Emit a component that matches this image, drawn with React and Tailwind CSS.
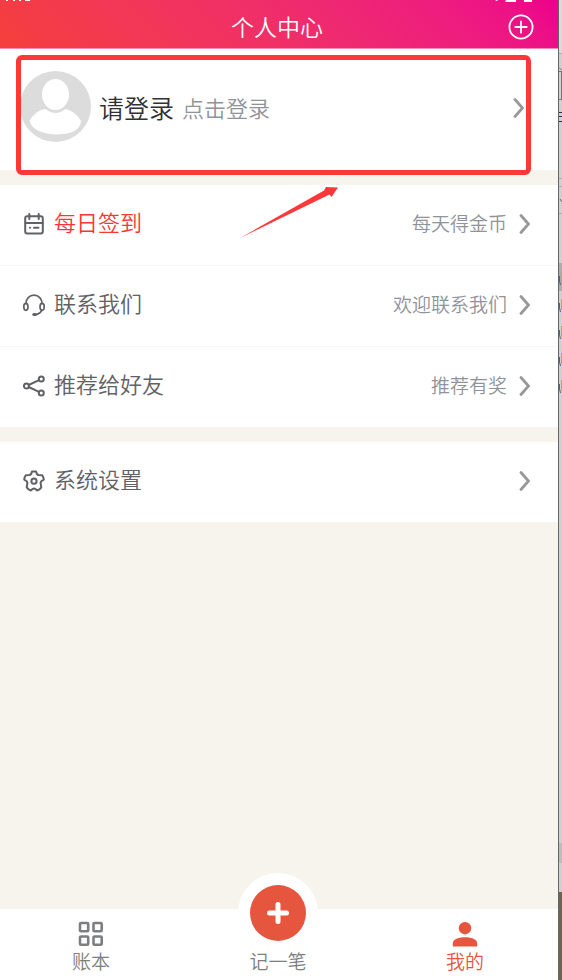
import React from "react";

const Chevron = () => (
  <svg width="12" height="20" viewBox="0 0 12 20" fill="none" stroke="#999999" strokeWidth="2.8" className="shrink-0" aria-hidden="true">
    <path d="M2 1.5 9.5 10 2 18.5" strokeLinecap="round" strokeLinejoin="miter" />
  </svg>
);

const CalendarIcon = () => (
  <svg width="22" height="22" viewBox="0 0 22 22" fill="none" stroke="#606266" strokeWidth="2" strokeLinecap="round" aria-hidden="true">
    <rect x="2.2" y="3.2" width="17.6" height="17.2" rx="2" />
    <path d="M2.5 10h17M6.3 1v5M15.7 1v5M11 14.8h4.5M7 14.8h.2" />
  </svg>
);

const HeadsetIcon = () => (
  <svg width="22" height="22" viewBox="0 0 22 22" fill="none" stroke="#606266" strokeWidth="1.7" strokeLinecap="round" aria-hidden="true">
    <path d="M3 9.5C3 4.8 6.3 1.2 11 1.2s8 3.6 8 8.3M18.8 16c-.8 2.4-2.4 3.8-5 4.3" />
    <ellipse cx="2.9" cy="12.8" rx="2.1" ry="3.5" />
    <ellipse cx="19.1" cy="12.8" rx="2.1" ry="3.5" />
    <path d="M10.8 20.4h1.7" strokeWidth="3" />
  </svg>
);

const ShareIcon = () => (
  <svg width="22" height="22" viewBox="0 0 22 22" fill="none" stroke="#606266" strokeWidth="2" aria-hidden="true">
    <circle cx="3.4" cy="11" r="2.5" />
    <circle cx="18.3" cy="4.1" r="2.5" />
    <circle cx="18.3" cy="17.9" r="2.5" />
    <path d="M5.7 10 16 5.2M5.7 12 16 16.8" />
  </svg>
);

const SettingsIcon = () => (
  <svg width="22" height="22" viewBox="0 0 22 22" fill="none" stroke="#606266" strokeWidth="2" strokeLinejoin="round" aria-hidden="true">
    <path d="M9 1.4h4q.8 3.4 2.6 3.7l3.500.1q1.400 1.800 1.700 4.400-3.300 1.600-3.200 3.200l.7 4.600q-1.500 2.300-4.100 3.100-2-2-3.200-2t-3.200 2q-2.600-.8-4.100-3.100l.7-4.600Q4.500 11.200 1.200 9.600 1.500 7 2.900 5.200l3.500-.1Q8.200 4.800 9 1.400Z" />
    <circle cx="11" cy="11.2" r="2.6" />
  </svg>
);

const Avatar = () => (
  <svg width="71" height="71" viewBox="0 0 71 71" className="shrink-0" aria-hidden="true">
    <circle cx="35.5" cy="35.5" r="35.5" fill="#dcdcdc" />
    <ellipse cx="35.5" cy="23.5" rx="13.5" ry="15.5" fill="#ffffff" />
    <path d="M9.5 49.5Q16 39 25.5 38 35.5 46 45.5 38 55 40 61 50 60 63.500 35.500 63.500 12 62 9.500 49.500Z" fill="#ffffff" />
  </svg>
);

const GridIcon = () => (
  <svg width="26" height="26" viewBox="0 0 26 26" fill="none" stroke="#7d7e80" strokeWidth="2.6" aria-hidden="true">
    <rect x="2" y="2" width="8.2" height="8.2" rx="1" />
    <rect x="15.5" y="2" width="8.2" height="8.2" rx="1" />
    <rect x="2" y="15.5" width="8.2" height="8.2" rx="1" />
    <rect x="15.5" y="15.5" width="8.2" height="8.2" rx="1" />
  </svg>
);

const UserIcon = () => (
  <svg width="26" height="26" viewBox="0 0 26 26" fill="#e6563f" aria-hidden="true">
    <circle cx="13" cy="7.2" r="6.2" />
    <path d="M.8 25.5v-3C.8 18.5 6 16.3 13 16.3s12.2 2.200 12.2 6.200v3z" />
  </svg>
);

const MenuRow = ({ icon, label, note, highlight }) => (
  <li>
    <a href="#" className="flex h-20 items-center pb-0.5 pl-[23px] pr-[27px]">
      {icon}
      <span className={`ml-[9px] pb-1.5 text-[22px] leading-8 ${highlight ? "text-[#fa3534]" : "text-[#606266]"}`}>
        {label}
      </span>
      <span className="ml-auto mr-3 pb-0.5 text-[19px] leading-8 text-[#909399]">{note}</span>
      <Chevron />
    </a>
  </li>
);

const TabBar = () => (
  <nav className="grid h-[71px] grid-cols-3 bg-white text-[19px] leading-6 text-[#7d7e80]">
    <a href="#" className="flex flex-col items-center justify-end gap-0.5 pb-[7px] pr-1">
      <GridIcon />
      账本
    </a>
    <a href="#" className="relative flex flex-col items-center justify-end pb-[7px] pr-0.5">
      <span className="absolute -top-9 h-20 w-20 rounded-full bg-white" />
      <span className="absolute -top-6 flex size-14 items-center justify-center rounded-full bg-[#e6563f]">
        <svg width="24" height="24" viewBox="0 0 24 24" stroke="#ffffff" strokeWidth="5" strokeLinecap="round" aria-hidden="true">
          <path d="M12 3.500v17M3.500 12h17" />
        </svg>
      </span>
      <span className="relative">记一笔</span>
    </a>
    <a href="#" className="flex flex-col items-center justify-end gap-0.5 pb-[7px] text-[#e6563f]">
      <UserIcon />
      我的
    </a>
  </nav>
);

const WindowEdge = () => (
  <aside className="flex w-1 shrink-0 flex-col border-l border-[#666666] bg-[#d0cfd1]">
    <div className="h-[54px] border-b border-[#b5b5b5] bg-[#dadada]" />
    <div className="h-[209px]">
      <svg width="3" height="160" viewBox="0 0 3 160" fill="none" aria-hidden="true">
        <path d="M0 13.5 3 16.5M0 17.5h3M2.500 17v28M0 45.5h3" stroke="#777777" />
        <path d="M0 58.5h3M0 62.5h3M0 67.5h3" stroke="#25364d" />
        <path d="M0 124.5h3M0 132.5h3M0 159.5h3" stroke="#b0b0b0" />
        <path d="m1 145 2 3" stroke="#666666" />
      </svg>
    </div>
    <div className="h-7 bg-[#adadad]" />
    <svg width="3" height="132" viewBox="0 0 3 132" className="-mt-7 shrink-0" fill="none" aria-hidden="true">
      {[0, 27, 54, 81, 108].map((y) => (
        <g key={y}>
          <path d={`M2.5 ${y + 9}v11`} stroke="#c69c71" />
          <path d={`M.5 ${y + 13}v5l1 4`} stroke="#48657e" />
        </g>
      ))}
    </svg>
    <div className="flex-1" />
    <div className="h-5 bg-[#bdbdbd]" />
    <div className="h-[29px]" />
    <div className="h-[88px] bg-[#6c6450]" />
  </aside>
);

export default function App() {
  return (
    <div className="flex min-h-screen font-['Noto_Sans_CJK_SC',sans-serif] font-[350]">
      <div className="flex min-w-0 flex-1 flex-col bg-[#f7f4ed]">
        <header className="relative flex h-[49px] items-center justify-center border-b border-[#f989b5] bg-linear-45 from-[#f43f3b] to-[#ec008c] pr-1 pt-1">
          <svg width="30" height="2" viewBox="0 0 30 2" fill="#ffffff" className="absolute left-1 top-0" aria-hidden="true">
            <path d="M2 0h2v1H2zM9 0h2v1H9zM15 0h2v1h-2zM21 0h5v1h-5z" />
          </svg>
          <svg width="40" height="2" viewBox="0 0 40 2" fill="#ffffff" className="absolute right-6 top-0" aria-hidden="true">
            <path d="M1 0h3l-1 1zM12 0h10v2H11zM30 0h8v2h-8z" />
          </svg>
          <h1 className="text-[23px] leading-8 text-white">个人中心</h1>
          <button type="button" aria-label="添加" className="absolute bottom-2 right-6">
            <svg width="26" height="26" viewBox="0 0 26 26" fill="none" stroke="#ffffff" strokeWidth="1.8" strokeLinecap="round" aria-hidden="true">
              <circle cx="13" cy="13" r="11.6" />
              <path d="M13 7.300v11.400M7.300 13h11.400" />
            </svg>
          </button>
        </header>

        <main className="flex flex-1 flex-col gap-[15px]">
          <section className="relative bg-white">
            <a href="#" className="flex items-center pb-7 pl-5 pr-[33px] pt-[22px]">
              <Avatar />
              <span className="ml-2 text-[25px] leading-8 text-[#303133]">请登录</span>
              <span className="ml-2 text-[22px] leading-8 text-[#909399]">点击登录</span>
              <span className="ml-auto pt-0.5">
                <Chevron />
              </span>
            </a>
            <div className="pointer-events-none absolute left-4 right-[27px] top-1.5 h-[120px] rounded-md border-5 border-[#fe3838]" />
            <svg width="100" height="54" viewBox="0 0 100 54" fill="#fe3838" className="pointer-events-none absolute left-60 top-[137px] z-10" aria-hidden="true">
              <path d="M0 52 84 4.500 86 1 98 1.500 91.500 11 89.500 8.500Z" />
            </svg>
          </section>

          <ul className="divide-y divide-[#f7f7f8] bg-white">
            <MenuRow icon={<CalendarIcon />} label="每日签到" note="每天得金币" highlight />
            <MenuRow icon={<HeadsetIcon />} label="联系我们" note="欢迎联系我们" />
            <MenuRow icon={<ShareIcon />} label="推荐给好友" note="推荐有奖" />
          </ul>

          <ul className="bg-white">
            <MenuRow icon={<SettingsIcon />} label="系统设置" />
          </ul>
        </main>

        <TabBar />
      </div>
      <WindowEdge />
    </div>
  );
}
